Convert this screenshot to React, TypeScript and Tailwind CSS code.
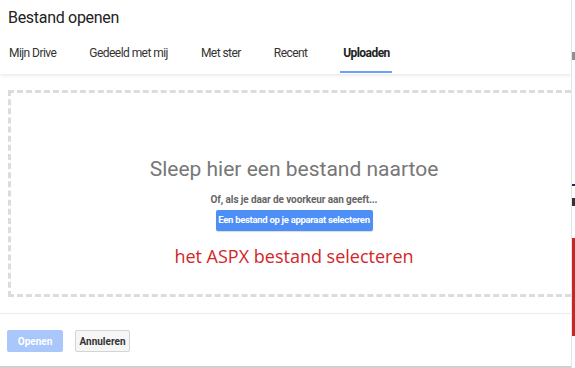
import React from "react"

const tabs = ["Mijn Drive", "Gedeeld met mij", "Met ster", "Recent", "Uploaden"]

export default function App() {
  return (
    <div className="flex h-[368px] w-[575px] overflow-hidden bg-white font-['Roboto',sans-serif]">
      <div className="flex w-[572px] flex-col overflow-hidden border-r border-[#e4e4e4]">
        <div className="h-[36px] pl-[8px] pt-[6px] text-[16px] tracking-[-0.3px] text-[#222]">Bestand openen</div>
        <div className="relative z-10 flex h-[38px] items-start gap-[33px] pl-[9px] pt-[7px] text-[12px] tracking-[-0.55px] text-[#333] shadow-[0_2px_3px_rgba(0,0,0,0.08)]">
          {tabs.map((t, i) => (
            <div
              key={t}
              className={
                i === 4
                  ? "flex h-[31px] flex-col items-center font-bold text-[#222]"
                  : "text-[#333]"
              }
            >
              <span className="leading-[20px]">{t}</span>
              {i === 4 && <div className="mt-[8px] h-[2px] w-[52px] bg-[#6fa0f6]" />}
            </div>
          ))}
        </div>
        <div className="pl-[8px] pt-[16px]">
          <div className="flex h-[207px] w-[572px] flex-col items-center border-[3px] border-dashed border-[#dcdcdc] pt-[63px]">
            <div className="text-[21px] leading-[26px] text-[#777]">Sleep hier een bestand naartoe</div>
            <div className="mt-[11px] text-[10px] font-bold leading-[14px] tracking-[-0.1px] text-[#666]">
              Of, als je daar de voorkeur aan geeft...
            </div>
            <div className="mt-[3px] flex h-[21px] w-[157px] items-center justify-center whitespace-nowrap rounded-[2px] bg-[#4d8ef7] text-[9.5px] font-bold tracking-[-0.3px] text-white shadow-[0_1px_1px_rgba(0,0,0,0.15)]">
              Een bestand op je apparaat selecteren
            </div>
            <div className="mt-[13px] font-['Open_Sans',sans-serif] text-[18px] leading-[24px] text-[#d3262a]">
              het ASPX bestand selecteren
            </div>
          </div>
        </div>
        <div className="mt-[16px] border-t border-[#ececec]" />
        <div className="flex gap-[12px] pl-[7px] pt-[16px]">
          <div className="flex h-[22px] w-[56px] items-center justify-center rounded-[2px] bg-[#a9c7fb] text-[10px] font-bold text-white">
            Openen
          </div>
          <div className="flex h-[22px] w-[55px] items-center justify-center rounded-[2px] border border-[#d4d4d4] bg-[#f6f6f6] text-[10px] font-bold text-[#333]">
            Annuleren
          </div>
        </div>
        <div className="mt-auto h-[2px] bg-[#d0d0d0]" />
      </div>
      <div className="flex w-[3px] flex-col bg-white">
        <div className="mt-[52px] h-[8px] bg-[#8a8f99]" />
        <div className="mt-[124px] h-[2px] bg-[#1d2a5a]" />
        <div className="mt-[12px] h-[8px] bg-[#333]" />
        <div className="mt-[32px] h-[98px] bg-[#c62828]" />
      </div>
    </div>
  )
}
